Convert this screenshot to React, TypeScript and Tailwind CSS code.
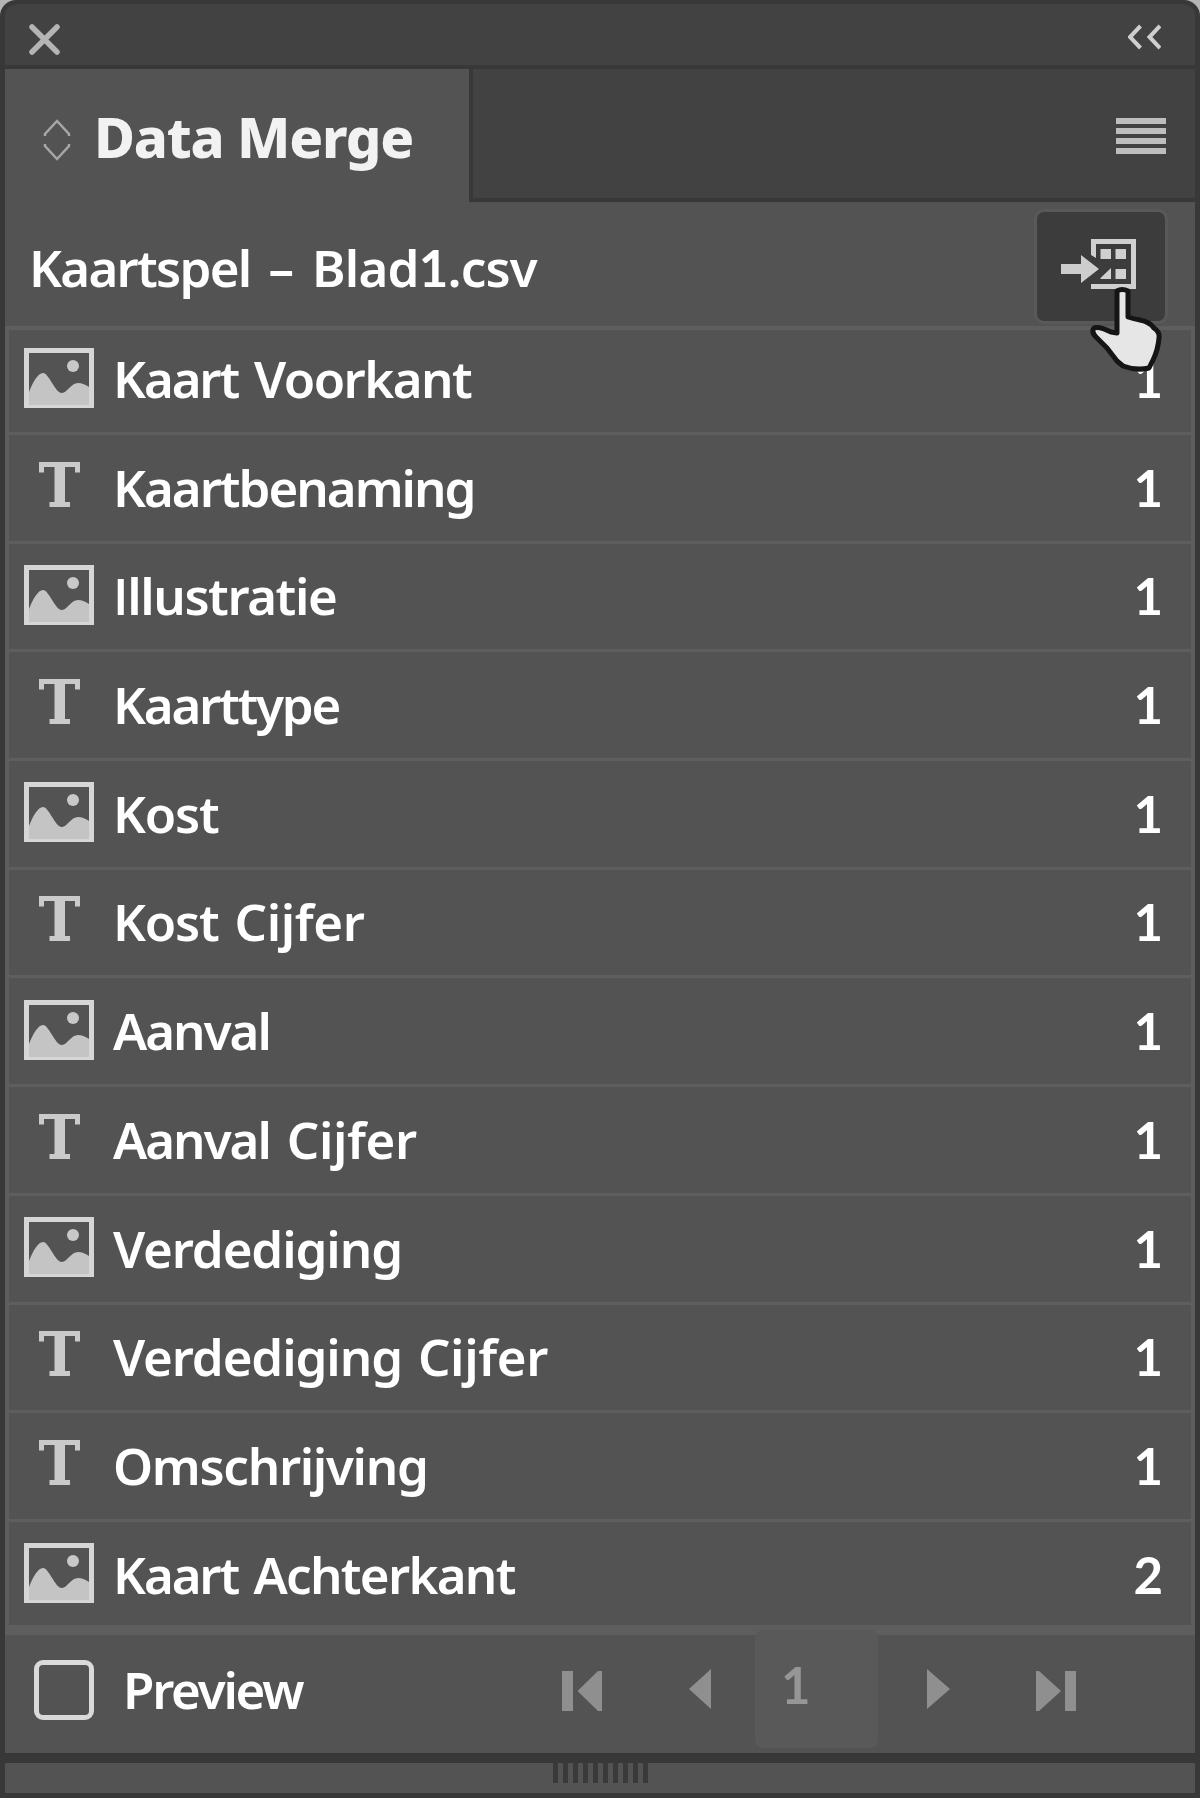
type Kind = "image" | "text";
type Word = { text: string; className: string };

const cijfer: Word = { text: "Cijfer", className: "tracking-[-0.4px]" };

const rows: { kind: Kind; words: Word[]; count: string }[] = [
  {
    kind: "image",
    words: [
      { text: "Kaart", className: "tracking-[-2.1px] mr-[16px]" },
      { text: "Voorkant", className: "tracking-[-1.5px]" },
    ],
    count: "1",
  },
  { kind: "text", words: [{ text: "Kaartbenaming", className: "tracking-[-2px]" }], count: "1" },
  { kind: "image", words: [{ text: "Illustratie", className: "tracking-[-1.4px]" }], count: "1" },
  { kind: "text", words: [{ text: "Kaarttype", className: "tracking-[-2.2px]" }], count: "1" },
  { kind: "image", words: [{ text: "Kost", className: "tracking-[-1.2px]" }], count: "1" },
  { kind: "text", words: [{ text: "Kost", className: "tracking-[-1.2px] mr-[16px]" }, cijfer], count: "1" },
  { kind: "image", words: [{ text: "Aanval", className: "tracking-[-2px]" }], count: "1" },
  { kind: "text", words: [{ text: "Aanval", className: "tracking-[-2px] mr-[17px]" }, cijfer], count: "1" },
  { kind: "image", words: [{ text: "Verdediging", className: "tracking-[-1.1px]" }], count: "1" },
  { kind: "text", words: [{ text: "Verdediging", className: "tracking-[-1.1px] mr-[16px]" }, cijfer], count: "1" },
  { kind: "text", words: [{ text: "Omschrijving", className: "tracking-[-1.3px]" }], count: "1" },
  {
    kind: "image",
    words: [
      { text: "Kaart", className: "tracking-[-2.1px] mr-[15.5px]" },
      { text: "Achterkant", className: "tracking-[-1.7px]" },
    ],
    count: "2",
  },
];

function ImageIcon() {
  return (
    <svg width="70" height="60" viewBox="0 0 70 60" className="block">
      <rect x="2.5" y="2.5" width="65" height="55" fill="none" stroke="#d6d6d6" strokeWidth="5" />
      <path d="M5 44C9 34 14 25 19 25C25 25 31 45 38 45C43 45 47 35 54 35C58 35 62 37 65 39V57H5Z" fill="#c4c4c4" />
      <circle cx="49" cy="18" r="6" fill="#c8c8c8" />
    </svg>
  );
}

function TextIcon() {
  return (
    <svg width="41" height="45" viewBox="0 0 41 45" className="ml-[15px] block">
      <path d="M0 0H41V10.500H36V5H26V40H31V45H10.500V40H15.500V5H5V10.500H0Z" fill="#cacaca" />
    </svg>
  );
}

function SourceIcon() {
  return (
    <svg width="76" height="52" viewBox="0 0 76 52" className="block">
      <path d="M0 25H20V16L38 30L20 44V35H0Z" fill="#cdcdcd" />
      <path d="M30 16V0H75V50H30V45H70V5H35V19Z" fill="#d0d0d0" />
      <path d="M39.500 10H50V20H39.500ZM54.500 10H65V20H54.500ZM54.500 30H65V40H54.500ZM50 29V40H39.500V39Z" fill="#d0d0d0" />
    </svg>
  );
}

function HandCursor() {
  return (
    <svg width="75" height="86" viewBox="0 0 75 86" className="absolute left-[52px] top-[74px] z-10">
      <path
        d="M28 5Q33 2 39 5V31Q45 33 51 34Q61 36 65 42Q71 46 70 52Q69 64 64 74L60 82Q47 85 34 80L28 75L18 62L7 51Q2 46 5 42Q10 40 22 46L28 47Z"
        fill="#e6e6e6"
        stroke="#151515"
        strokeWidth="5"
        strokeLinejoin="round"
      />
    </svg>
  );
}

function NavIcon({ d, width, height }: { d: string; width: number; height: number }) {
  return (
    <svg width={width} height={height} viewBox={`0 0 ${width} ${height}`} className="block">
      <path d={d} fill="#8f8f8f" />
    </svg>
  );
}

function Label({ text }: { text: string }) {
  if (!text.startsWith("I")) return <>{text}</>;
  return (
    <>
      <span className="font-['Open_Sans']">I</span>
      {text.slice(1)}
    </>
  );
}

export default function App() {
  return (
    <div className="h-[1798px] w-[1200px] overflow-hidden bg-[#b4b4b4] font-['Noto_Sans',sans-serif]">
      <div className="flex h-full w-full flex-col rounded-t-[16px] bg-[#383838] px-[5px] pb-[5px] pt-1">
        <header className="flex h-[61px] shrink-0 items-start justify-between rounded-t-[12px] bg-[#424242] pl-6 pr-[34px] pt-5">
          <svg width="31" height="31" viewBox="0 0 31 31" className="block">
            <path d="M3 3L28 28M28 3L3 28" stroke="#b4b4b4" strokeWidth="5.500" strokeLinecap="round" />
          </svg>
          <svg width="33" height="26" viewBox="0 0 33 26" className="block">
            <path d="M12.500 2L2 13L12.500 24M32 2L21.500 13L32 24" fill="none" stroke="#cfcfcf" strokeWidth="4" />
          </svg>
        </header>

        <div className="mt-1 flex h-[133px] shrink-0 bg-[#535353]">
          <div className="flex w-[464px] items-center pl-[38px]">
            <svg width="28" height="42" viewBox="0 0 28 42" className="mt-2 block">
              <path d="M2 17V15L14 2L26 15V17M2 25V27L14 40L26 27V25" fill="none" stroke="#a6a6a6" strokeWidth="2.500" />
            </svg>
            <h1 className="ml-[23px] mt-[2px] whitespace-nowrap text-[56px] font-extrabold leading-[133px] tracking-[-1.2px] text-[#f2f2f2]">
              Data Merge
            </h1>
          </div>
          <div className="flex flex-1 items-start justify-end border-b-4 border-l-4 border-[#383838] bg-[#424242] pr-[29px] pt-[49px]">
            <div className="flex w-[50px] flex-col gap-1">
              <div className="h-[6px] bg-[#bebebe]" />
              <div className="h-[6px] bg-[#bebebe]" />
              <div className="h-[6px] bg-[#bebebe]" />
              <div className="h-[6px] bg-[#bebebe]" />
            </div>
          </div>
        </div>

        <section className="flex h-[124px] shrink-0 items-start justify-between bg-[#535353] pl-6 pr-[27px] pt-[7px]">
          <div className="flex whitespace-pre text-[51px] font-semibold leading-[116px] text-white">
            <span className="tracking-[-1.7px]">Kaartspel</span>
            <span className="ml-[18px] mr-[18px]">–</span>
            <span className="tracking-[-0.8px]">
              Blad<span className="font-[Lato] font-bold">1</span>.csv
            </span>
          </div>
          <button className="relative flex h-[115px] w-[134px] items-start rounded-[10px] border-[3px] border-[#595959] bg-[#3c3c3c] pl-6 pt-[27px]">
            <SourceIcon />
            <HandCursor />
          </button>
        </section>

        <ul className="flex h-[1309px] shrink-0 flex-col border-x-4 border-b-[10px] border-t-4 border-[#5e5e5e] bg-[#535353]">
          {rows.map((row, i) => (
            <li
              key={i}
              className={`flex shrink-0 items-start border-[#5e5e5e] pl-[15px] pr-[28px] ${
                i === 0 ? "h-[105px] border-b-[3px]" : i === rows.length - 1 ? "h-[103px]" : "h-[108.7px] border-b-[3px]"
              } ${i === 0 ? "pt-0" : "pt-[3.7px]"}`}
            >
              <div className={`w-[89px] ${row.kind === "image" ? "pt-[17.500px]" : "pt-[23px]"}`}>
                {row.kind === "image" ? <ImageIcon /> : <TextIcon />}
              </div>
              <div className="flex flex-1 whitespace-nowrap text-[51px] font-semibold leading-[96px] text-white">
                {row.words.map((word) => (
                  <span key={word.text} className={word.className}>
                    <Label text={word.text} />
                  </span>
                ))}
              </div>
              <div className="font-[Lato] text-[51px] font-bold leading-[98px] text-white">{row.count}</div>
            </li>
          ))}
        </ul>

        <footer className="relative flex h-[118px] shrink-0 items-start bg-[#535353]">
          <div className="ml-[29px] mt-[25px] h-[60px] w-[60px] rounded-[9px] border-[5px] border-[#dadada]" />
          <div className="ml-[29px] whitespace-nowrap text-[51px] font-semibold leading-[109px] tracking-[-2.2px] text-white">
            Preview
          </div>
          <div className="absolute left-[557px] top-[-5px] flex items-start">
            <div className="mt-[41px] w-[127px]">
              <NavIcon width={42} height={40} d="M0 0H11V40H0ZM36 0H40V40H36L15.500 20Z" />
            </div>
            <div className="mt-[39px] w-[66px]">
              <NavIcon width={23} height={40} d="M22 0V40L0 20Z" />
            </div>
            <div className="h-[118px] w-[123px] rounded-[8px] bg-[#595959] pl-[26px] font-[Lato] text-[51px] font-bold leading-[110px] text-[#969696]">
              1
            </div>
            <div className="ml-[49px] mt-[39px] w-[109px]">
              <NavIcon width={23} height={40} d="M0 0L23 20L0 40Z" />
            </div>
            <div className="mt-[41px]">
              <NavIcon width={40} height={40} d="M0 0H3L25 20L3 40H0ZM29 0H40V40H29Z" />
            </div>
          </div>
        </footer>

        <div className="mt-[10px] flex h-[30px] shrink-0 justify-center gap-[5px] bg-[#535353]">
          {Array.from({ length: 10 }, (_, i) => (
            <div key={i} className="h-5 w-[5px] bg-[#3a3a3a]" />
          ))}
        </div>
      </div>
    </div>
  );
}
